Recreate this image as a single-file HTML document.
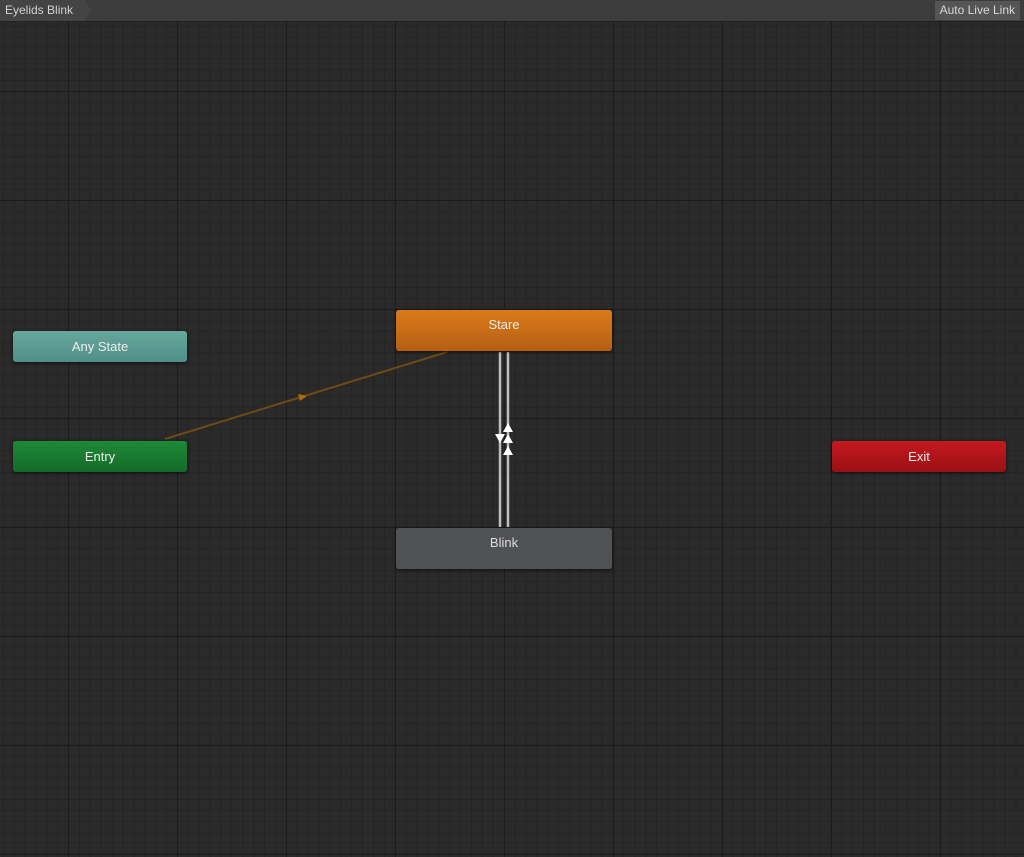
<!DOCTYPE html>
<html><head><style>
html,body{margin:0;padding:0;width:1024px;height:857px;overflow:hidden;background:#2a2a2a;font-family:"Liberation Sans",sans-serif}
#grid{position:absolute;left:0;top:0;width:1024px;height:857px;
background-color:#2a2a2a;
background-image:
linear-gradient(to right,#1c1c1c 1px,transparent 1px),
linear-gradient(to bottom,#1c1c1c 1px,transparent 1px),
linear-gradient(to right,#242424 1px,transparent 1px),
linear-gradient(to bottom,#242424 1px,transparent 1px);
background-size:109px 109px,109px 109px,10.9px 10.9px,10.9px 10.9px;
background-position:68px 91px,68px 91px,68px 91px,68px 91px;}
#bar{position:absolute;left:0;top:0;width:1024px;height:21px;background:#3c3c3c;border-bottom:1px solid #222}
.crumb{position:absolute;left:0;top:0;height:21px;padding:0 12px 0 5px;color:#d2d2d2;font-size:12px;line-height:21px;background:#444}
.crumb:after{content:"";position:absolute;right:-6px;top:0;border-left:6px solid #444;border-top:10.5px solid transparent;border-bottom:10.5px solid transparent}
.live{position:absolute;right:4px;top:1px;height:19px;padding:0 5px;background:#555;color:#d8d8d8;font-size:12px;line-height:19px}
.node{position:absolute;border-radius:3px;color:#eee;font-size:13px;text-align:center;box-shadow:0 1px 3px rgba(0,0,0,.6)}
</style></head><body>
<div id="grid"></div>
<svg width="1024" height="857" style="position:absolute;left:0;top:0">
<line x1="165" y1="439" x2="447" y2="352" stroke="#6e4a14" stroke-width="2"/>
<polygon points="307,396 298,394 300,401" fill="#b06a10"/>
<line x1="500" y1="352" x2="500" y2="527" stroke="#bdbdbd" stroke-width="2.5"/>
<line x1="508" y1="352" x2="508" y2="527" stroke="#bdbdbd" stroke-width="2.5"/>
<polygon points="495,434 505,434 500,443" fill="#fff"/>
<polygon points="508,423 503,432 513,432" fill="#fff"/>
<polygon points="508,434 503,443 513,443" fill="#fff"/>
<polygon points="508,446 503,455 513,455" fill="#fff"/>
</svg>
<div id="bar"><div class="crumb">Eyelids Blink</div><div class="live">Auto Live Link</div></div>
<div class="node" style="left:13px;top:331px;width:174px;height:31px;line-height:31px;background:linear-gradient(#67a89d,#4f8f86)">Any State</div>
<div class="node" style="left:13px;top:441px;width:174px;height:31px;line-height:31px;background:linear-gradient(#1f8a38,#136a28)">Entry</div>
<div class="node" style="left:832px;top:441px;width:174px;height:31px;line-height:31px;background:linear-gradient(#c41a20,#9a1014)">Exit</div>
<div class="node" style="left:396px;top:310px;width:216px;height:41px;line-height:30px;background:linear-gradient(#dc7a1c,#b45f12)">Stare</div>
<div class="node" style="left:396px;top:528px;width:216px;height:41px;line-height:30px;background:#505155;color:#ddd">Blink</div>
</body></html>
